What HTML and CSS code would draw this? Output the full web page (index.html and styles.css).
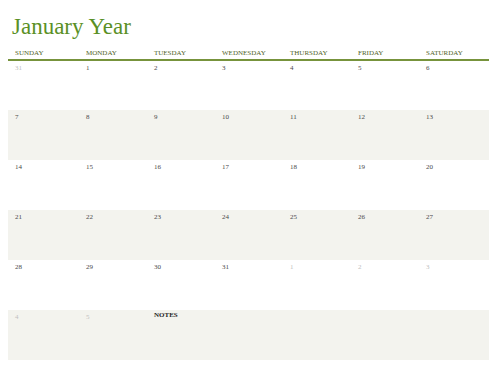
FILE: index.html
```html
<!DOCTYPE html>
<html>
<head>
<meta charset="utf-8">
<link rel="stylesheet" href="styles.css">
</head>
<body>
<h1 class="title">January Year</h1>
<div class="cal">
  <div class="head">SUNDAY</div><div class="head">MONDAY</div><div class="head">TUESDAY</div><div class="head">WEDNESDAY</div><div class="head">THURSDAY</div><div class="head">FRIDAY</div><div class="head">SATURDAY</div>
  <div class="rule"></div>
  <div class="cell muted">31</div><div class="cell">1</div><div class="cell">2</div><div class="cell">3</div><div class="cell">4</div><div class="cell">5</div><div class="cell">6</div>
  <div class="cell alt">7</div><div class="cell alt">8</div><div class="cell alt">9</div><div class="cell alt">10</div><div class="cell alt">11</div><div class="cell alt">12</div><div class="cell alt">13</div>
  <div class="cell">14</div><div class="cell">15</div><div class="cell">16</div><div class="cell">17</div><div class="cell">18</div><div class="cell">19</div><div class="cell">20</div>
  <div class="cell alt">21</div><div class="cell alt">22</div><div class="cell alt">23</div><div class="cell alt">24</div><div class="cell alt">25</div><div class="cell alt">26</div><div class="cell alt">27</div>
  <div class="cell">28</div><div class="cell">29</div><div class="cell">30</div><div class="cell">31</div><div class="cell muted">1</div><div class="cell muted">2</div><div class="cell muted">3</div>
  <div class="cell alt muted">4</div><div class="cell alt muted">5</div><div class="cell alt notes">NOTES</div>
</div>
</body>
</html>
```

FILE: styles.css
```css
html, body {
  margin: 0;
  padding: 0;
  background: #ffffff;
}
body {
  padding: 0 9px 0 8px;
  font-family: "Liberation Serif", "Times New Roman", serif;
}
.title {
  margin: 0;
  padding: 14px 0 0 4px;
  font-size: 23px;
  line-height: 26px;
  font-weight: normal;
  color: #5a9025;
}
.cal {
  margin-top: 9px;
  display: grid;
  grid-template-columns: 71px 68px 68px 68px 68px 68px 70px;
  grid-template-rows: 10px 2px 49px repeat(5, 50px);
}
.head {
  padding-left: 7px;
  font-size: 7px;
  line-height: 9px;
  color: #4f6228;
  white-space: nowrap;
}
.rule {
  grid-column: 1 / -1;
  background: #77933c;
}
.cell {
  padding: 3px 0 0 7px;
  font-size: 7px;
  line-height: 9px;
  color: #4a4a4a;
}
.cell.alt {
  background: #f3f3ee;
}
.cell.muted {
  color: #c0c0c0;
}
.cell.notes {
  grid-column: 3 / -1;
  padding-top: 1px;
  font-weight: bold;
  color: #262626;
}
```
